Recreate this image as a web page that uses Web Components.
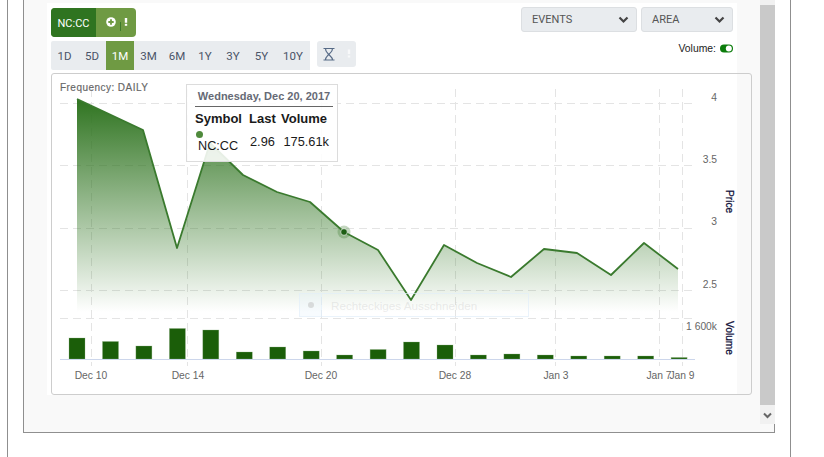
<!DOCTYPE html>
<html>
<head>
<meta charset="utf-8">
<title>NC:CC chart</title>
<style>
  html, body { margin: 0; background: #fff; overflow: hidden; }
  body { font-family: "Liberation Sans", Arial, sans-serif; }
</style>
</head>
<body>
<page-frame>
  <chart-toolbar>
    <symbol-tag slot="left">NC:CC</symbol-tag>
    <range-selector slot="left"></range-selector>
    <select-box slot="right" style="width:116px">EVENTS</select-box>
    <select-box slot="right" style="width:92px">AREA</select-box>
    <volume-toggle slot="below"></volume-toggle>
  </chart-toolbar>
  <price-chart>
    <chart-tooltip></chart-tooltip>
    <snip-ghost></snip-ghost>
  </price-chart>
</page-frame>

<script>
const GREEN = '#6f9a43';

class PageFrame extends HTMLElement {
  connectedCallback() {
    this.attachShadow({ mode: 'open' });
    this.shadowRoot.innerHTML = `
      <style>
        :host { display: block; box-sizing: border-box; width: 784px; height: 457px; margin-left: 7px;
                border-left: 1px solid #8f8f8f; border-right: 1px solid #8f8f8f; padding-left: 15px; }
        .box { box-sizing: border-box; width: 752px; height: 433px; display: flex; background: #f9f9f9;
               border: 1px solid #8f8f8f; border-top: 0; }
        .content { width: 736px; flex: none; padding: 3px 0 0 23px; box-sizing: border-box; }
        .panel { box-sizing: border-box; width: 690px; height: 392px; background: #fff; padding: 4px 4px 0; }
        .scroll { width: 15px; flex: none; height: 424px; margin-right: -1px; background: #f1f1f1;
                  display: flex; flex-direction: column; padding-top: 5px; box-sizing: border-box; }
        .thumb { height: 400px; background: #c9c9c9; }
        .arrow { flex: 1; display: flex; align-items: center; justify-content: center; padding-top: 2px; }
      </style>
      <div class="box">
        <div class="content"><div class="panel"><slot></slot></div></div>
        <div class="scroll">
          <div class="thumb"></div>
          <div class="arrow"><svg width="9" height="7" viewBox="0 0 9 7"><path d="M1 1.5 4.5 5 8 1.5" fill="none" stroke="#666" stroke-width="2"/></svg></div>
        </div>
      </div>`;
  }
}

class ChartToolbar extends HTMLElement {
  connectedCallback() {
    this.attachShadow({ mode: 'open' });
    this.shadowRoot.innerHTML = `
      <style>
        :host { display: flex; justify-content: space-between; height: 66px; }
        .left { padding-top: 1px; display: flex; flex-direction: column; gap: 4px; align-items: flex-start; }
        .right { display: flex; flex-direction: column; align-items: flex-end; }
        .selects { display: flex; gap: 4px; }
        .below { margin-top: 11px; }
      </style>
      <div class="left"><slot name="left"></slot></div>
      <div class="right">
        <div class="selects"><slot name="right"></slot></div>
        <div class="below"><slot name="below"></slot></div>
      </div>`;
  }
}

class SymbolTag extends HTMLElement {
  connectedCallback() {
    this.attachShadow({ mode: 'open' });
    this.shadowRoot.innerHTML = `
      <style>
        :host { display: flex; width: 85px; height: 29px; border-radius: 4px; overflow: hidden; background: ${GREEN}; color: #fff; }
        .name { width: 45px; background: #2f7420; font-family: Roboto, sans-serif; font-size: 11px; display: flex; align-items: center; justify-content: center; padding-top: 1px; box-sizing: border-box; }
        .tools { flex: 1; display: flex; }
        svg { display: block; }
      </style>
      <div class="name"><slot></slot></div>
      <div class="tools">
        <svg width="40" height="29" viewBox="0 0 40 29">
          <circle cx="15" cy="14" r="4.8" fill="#fff"/>
          <path d="M15 11.3v5.4M12.3 14h5.4" stroke="${GREEN}" stroke-width="1.8"/>
          <path d="M24.5 14v9" stroke="#3c7a2a" stroke-width="1"/>
          <path d="M30 10v4.8" stroke="#fff" stroke-width="2.4"/>
          <rect x="28.8" y="15.8" width="2.4" height="2" fill="#fff"/>
        </svg>
      </div>`;
  }
}

class RangeSelector extends HTMLElement {
  connectedCallback() {
    this.attachShadow({ mode: 'open' });
    const ranges = [['1D', 27], ['5D', 28], ['1M', 28], ['3M', 29], ['6M', 28], ['1Y', 28], ['3Y', 28], ['5Y', 29], ['10Y', 34]];
    this.shadowRoot.innerHTML = `
      <style>
        :host { display: flex; gap: 7px; align-items: flex-start; }
        .bar { display: flex; height: 29px; background: #e9ecef; border-radius: 2px 0 0 2px; font-family: Roboto, sans-serif; font-size: 11.5px; color: #4a5468; }
        .bar span { display: flex; align-items: center; justify-content: center; }
        .bar .on { background: ${GREEN}; color: #fff; }
        .clock { width: 39px; height: 26px; background: #e9ecef; border-radius: 3px; }
        svg { display: block; }
      </style>
      <div class="bar">${ranges.map(([t, w]) => `<span class="${t === '1M' ? 'on' : ''}" style="width:${w}px">${t}</span>`).join('')}</div>
      <div class="clock">
        <svg width="39" height="26" viewBox="0 0 39 26">
          <path d="M6.5 7.500h11M6.500 19h11M8.500 7.500c0 3.700 2.500 4.300 3 6-.5 1.500-3 2-3 5.500M15.500 7.500c0 3.700-3 4.300-3.500 6 .5 1.500 3.500 2 3.500 5.500" fill="none" stroke="#566a86" stroke-width="1.200"/>
          <path d="M32 8.500v4.500" stroke="#f8f9fa" stroke-width="2.400"/>
          <rect x="30.800" y="14.500" width="2.400" height="2" fill="#f8f9fa"/>
        </svg>
      </div>`;
  }
}

class SelectBox extends HTMLElement {
  connectedCallback() {
    this.attachShadow({ mode: 'open' });
    this.shadowRoot.innerHTML = `
      <style>
        :host { display: flex; box-sizing: border-box; height: 25px; align-items: center; justify-content: space-between;
                background: #e9ecef; border: 1px solid #dcdfe2; border-radius: 3px; padding: 0 7px 0 10px;
                font-family: Roboto, sans-serif; font-size: 11px; color: #555; }
        svg { display: block; }
      </style>
      <slot></slot>
      <svg width="11" height="8" viewBox="0 0 11 8"><path d="M1.500 1.500 5.500 5.500 9.500 1.500" fill="none" stroke="#444" stroke-width="2.200"/></svg>`;
  }
}

class VolumeToggle extends HTMLElement {
  connectedCallback() {
    this.attachShadow({ mode: 'open' });
    this.shadowRoot.innerHTML = `
      <style>
        :host { display: flex; align-items: center; gap: 4px; font-size: 10.4px; color: #222; height: 10px; }
        svg { display: block; }
      </style>
      <span>Volume:</span>
      <svg width="13" height="9" viewBox="0 0 13 9">
        <rect width="13" height="8" y=".5" rx="4" fill="#0c7d0c"/>
        <circle cx="8.800" cy="4.500" r="3" fill="#fff"/>
      </svg>`;
  }
}

class PriceChart extends HTMLElement {
  connectedCallback() {
    this.attachShadow({ mode: 'open' });
    const pts = [[77,99],[143,130],[177,248],[210,143],[243,175],[277,192],[310,202],[344,232],[378,250],[411,300],[444,245],[477,263],[511,277],[544,249],[577,253],[611,275],[644,243],[678,269]];
    const line = pts.map(p => p.join(',')).join(' ');
    const barTops = [338,341.5,346,328.5,330,352,347,351,355,349.5,342,345,355,354,355,356,356,356,357.5];
    const bars = barTops.map((top, i) => {
      const x = 69 + i * 33.45;
      return `<rect x="${x.toFixed(1)}" y="${top}" width="16" height="${359 - top}" fill="#1b5e09" stroke="#8fb184" stroke-opacity=".5" stroke-width=".6"/>`;
    }).join('');
    const gridY = [103, 165, 228, 290, 318].map(y => `<path d="M60 ${y + .5}H695"/>`).join('');
    const gridX = [91, 187, 321, 455, 555, 659, 682].map(x => `<path d="M${x + .5} 89V366"/>`).join('');
    const dates = [['Dec 10', 91], ['Dec 14', 188], ['Dec 20', 321], ['Dec 28', 455], ['Jan 3', 556], ['Jan 7', 659], ['Jan 9', 682]]
      .map(([t, x]) => `<text x="${x}" y="379" text-anchor="middle">${t}</text>`).join('');
    const prices = [['4', 101], ['3.5', 163], ['3', 225], ['2.5', 288]]
      .map(([t, y]) => `<text x="717" y="${y}" text-anchor="end">${t}</text>`).join('');
    this.shadowRoot.innerHTML = `
      <style>
        :host { display: block; position: relative; box-sizing: border-box; width: 701px; height: 322px; margin-right: -15px;
                border: 1px solid #cdcdcd; border-radius: 3px; }
        svg { display: block; font-family: "Liberation Sans", Arial, sans-serif; }
        .grid path { stroke: #e4e4e4; stroke-width: 1; stroke-dasharray: 8 5; fill: none; }
        .lab text { font-size: 10.3px; fill: #666; }
        .title { font-size: 10.2px; fill: #10103a; stroke: #10103a; stroke-width: .25px; }
        .freq { font-size: 10px; fill: #666; letter-spacing: .46px; stroke: #666; stroke-width: .15px; }
      </style>
      <svg width="699" height="320" viewBox="52 74 699 320">
        <defs>
          <linearGradient id="fade" gradientUnits="userSpaceOnUse" x1="0" y1="99" x2="0" y2="312">
            <stop offset="0" stop-color="#2f7420"/>
            <stop offset="1" stop-color="#2f7420" stop-opacity="0"/>
          </linearGradient>
        </defs>
        <g class="grid">${gridY}${gridX}</g>
        <polygon points="77,312 ${line} 678,312" fill="url(#fade)"/>
        <polyline points="${line}" fill="none" stroke="#3a7a2e" stroke-width="1.800" stroke-linejoin="round"/>
        <circle cx="344" cy="232" r="6.500" fill="#3a7a2e" fill-opacity=".3"/>
        <circle cx="344" cy="232" r="3.300" fill="#1d5e14" stroke="#fff" stroke-width=".6"/>
        ${bars}
        <path d="M60 359.500H695" stroke="#ccd6eb" stroke-width="1"/>
        <g class="lab">${dates}${prices}<text x="717" y="330" text-anchor="end">1 600k</text></g>
        <text class="freq" x="60" y="90.500">Frequency: DAILY</text>
        <text class="title" transform="translate(725.500 190) rotate(90)">Price</text>
        <text class="title" transform="translate(725.500 321) rotate(90)">Volume</text>
      </svg>
      <slot></slot>`;
  }
}

class ChartTooltip extends HTMLElement {
  connectedCallback() {
    this.attachShadow({ mode: 'open' });
    this.shadowRoot.innerHTML = `
      <style>
        :host { position: absolute; left: 134px; top: 10px; box-sizing: border-box; width: 152px; height: 78px;
                background: rgba(255,255,255,.88); border: 1px solid #dcdcdc; padding: 4px 4px 0 8px; color: #1a1a1a; }
        .date { font-size: 11px; font-weight: 700; color: #666a75; text-align: center; height: 17px; line-height: 14px;
                border-bottom: 1px solid #666; }
        .grid { display: grid; grid-template-columns: 54px 32px 48px; margin-top: 4px; }
        .head { font-size: 13px; font-weight: 700; line-height: 15px; }
        .cell { font-size: 12.8px; line-height: 16px; padding-top: 8px; }
        .dot { display: block; width: 7px; height: 7px; border-radius: 50%; background: #4f8a3c; margin: 0 0 1px 1px; }
        .sym { display: block; margin-top: -1px; padding-left: 3px; font-size: 12.7px; line-height: 16px; }
        .first { padding-top: 5px; }
        .r { margin-left: 1px; }
        .n { text-align: right; }
      </style>
      <div class="date">Wednesday, Dec 20, 2017</div>
      <div class="grid">
        <div class="head">Symbol</div><div class="head">Last</div><div class="head">Volume</div>
        <div class="first"><span class="dot"></span><span class="sym">NC:CC</span></div>
        <div class="cell r">2.96</div><div class="cell n">175.61k</div>
      </div>`;
  }
}

class SnipGhost extends HTMLElement {
  connectedCallback() {
    this.attachShadow({ mode: 'open' });
    this.shadowRoot.innerHTML = `
      <style>
        :host { position: absolute; left: 247px; top: 219px; box-sizing: border-box; width: 230px; height: 24px; display: flex;
                border: 1px solid rgba(225,238,250,.7); font-size: 11.7px; color: rgba(190,190,190,.3); align-items: center; }
        .ic { width: 21px; height: 100%; background: rgba(225,240,252,.28); border-right: 1px solid rgba(225,238,250,.6);
              display: flex; align-items: center; justify-content: center; margin-right: 9px; }
        .ic i { width: 6px; height: 6px; border-radius: 50%; background: rgba(190,190,190,.5); }
      </style>
      <div class="ic"><i></i></div>
      <span>Rechteckiges Ausschneiden</span>`;
  }
}

customElements.define('page-frame', PageFrame);
customElements.define('chart-toolbar', ChartToolbar);
customElements.define('symbol-tag', SymbolTag);
customElements.define('range-selector', RangeSelector);
customElements.define('select-box', SelectBox);
customElements.define('volume-toggle', VolumeToggle);
customElements.define('price-chart', PriceChart);
customElements.define('chart-tooltip', ChartTooltip);
customElements.define('snip-ghost', SnipGhost);
</script>
</body>
</html>
